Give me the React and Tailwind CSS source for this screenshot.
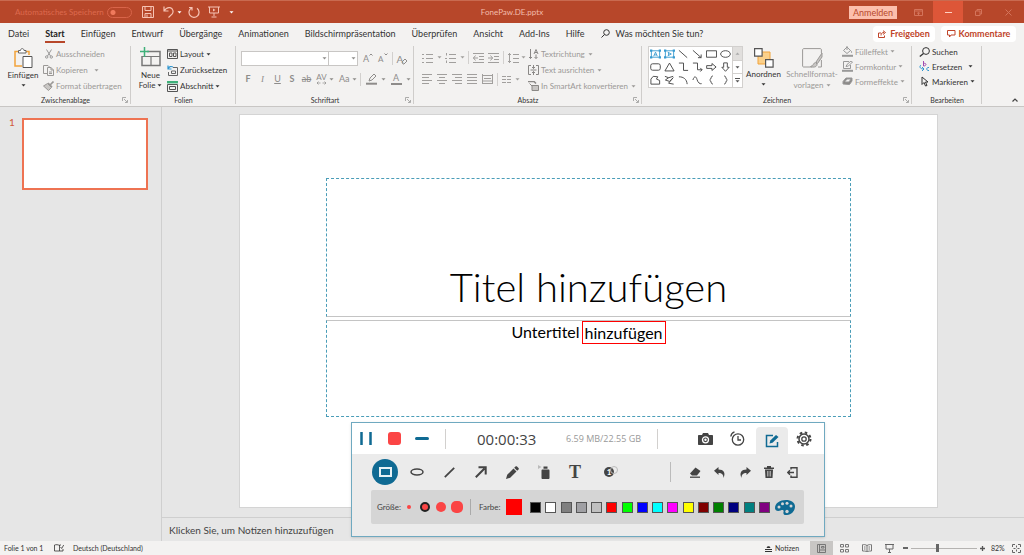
import React from "react";

function Icon({ w = 12, h = 12, box, children, className = "", sw = 1 }) {
  return (
    <svg
      width={w}
      height={h}
      viewBox={box || `0 0 ${w} ${h}`}
      fill="none"
      stroke="currentColor"
      strokeWidth={sw}
      className={`shrink-0 ${className}`}
      aria-hidden="true"
    >
      {children}
    </svg>
  );
}

function Caret({ className = "" }) {
  return (
    <svg width="5" height="3" viewBox="0 0 5 3" className={`shrink-0 ${className}`} aria-hidden="true">
      <path d="M0.5 0.3h4L2.5 2.6z" fill="currentColor" />
    </svg>
  );
}

function Sep({ className = "bg-[#d2d0ce]" }) {
  return <span className={`w-px shrink-0 ${className}`} />;
}

/* ---------- title bar ---------- */

function TitleBar() {
  return (
    <header className="flex h-[23px] shrink-0 items-center border-t border-[#c96a50] bg-[#b7472a] text-[8px] text-[#f0b8a6]">
      <div className="flex flex-1 items-center">
        <label className="flex items-center gap-1 pl-[15px] text-[#dd6a4e]">
          <span className="w-[88px] text-[8px] whitespace-nowrap">Automatisches Speichern</span>
          <input
            type="checkbox"
            role="switch"
            className="h-[11px] w-[25px] appearance-none rounded-full border border-[#d9654a] bg-[radial-gradient(circle_at_5px_50%,#f07a5c_2px,transparent_3px)]"
          />
        </label>
        <div className="flex items-center pl-[10px] text-[#f6c3b4]">
          <button aria-label="Speichern">
            <Icon>
              <path d="M.5.5h11v11H.5zM3 .5v4h6v-4M3 11.500v-4h6v4M5 8.500v3" />
            </Icon>
          </button>
          <button aria-label="Rückgängig" className="ml-[9px] flex items-center gap-[3px]">
            <Icon w={11}>
              <path d="M1 .5v4.500h4.500M1.200 4.800C3 2 5 1.200 7 1.700c3 .8 4 4 2 6.500L5.500 11.500" strokeWidth="1.200" />
            </Icon>
            <Caret className="text-white" />
          </button>
          <button aria-label="Wiederholen" className="ml-[6px]">
            <Icon>
              <path d="M3.500 2A5 5 0 1 0 9 2.300M1 1.500h3v3" strokeWidth="1.200" />
            </Icon>
          </button>
          <button aria-label="Von Anfang an" className="ml-[8px]">
            <Icon>
              <path d="M0 1h12M1.500 1v6h9V1M6 7v3M3.500 11h5" />
              <path d="M5 2.500v3l2.500-1.500z" fill="currentColor" stroke="none" />
            </Icon>
          </button>
          <button aria-label="Symbolleiste anpassen" className="ml-[9px]">
            <Caret className="text-white" />
          </button>
        </div>
      </div>
      <span className="text-[#f3bcab]">FonePaw.DE.pptx</span>
      <div className="flex flex-1 items-center justify-end self-stretch">
        <button className="mr-[6px] h-[13px] w-[48px] bg-[#fcbfad] text-[9px] leading-[13px] text-[#b7472a]">Anmelden</button>
        <button aria-label="Menübandoptionen" className="flex w-[30px] justify-center text-[#d4745b]">
          <Icon w={9} h={7}>
            <path d="M.5.5h8v6h-8zM.5 2h8M4.500 6V3.500M3 4.500l1.500-1 1.500 1" />
          </Icon>
        </button>
        <button aria-label="Minimieren" className="flex w-[30px] items-center justify-center self-stretch bg-[#dd5638] text-[#ffd0c2]">
          <Icon w={7} h={1}>
            <path d="M0 .5h7" />
          </Icon>
        </button>
        <button aria-label="Verkleinern" className="flex w-[30px] justify-center text-[#d4745b]">
          <Icon w={7} h={7}>
            <path d="M.5 2h4.500v4.500H.5zM2 2V.5h4.500V5H5" />
          </Icon>
        </button>
        <button aria-label="Schließen" className="flex w-[31px] justify-center text-[#d4745b]">
          <Icon w={7} h={7}>
            <path d="M.5.5l6 6M6.500.5l-6 6" />
          </Icon>
        </button>
      </div>
    </header>
  );
}

/* ---------- tabs ---------- */

const TABS = [
  "Datei",
  "Start",
  "Einfügen",
  "Entwurf",
  "Übergänge",
  "Animationen",
  "Bildschirmpräsentation",
  "Überprüfen",
  "Ansicht",
  "Add-Ins",
  "Hilfe",
];

function TabBar() {
  return (
    <nav className="flex h-[21px] shrink-0 items-center text-[9px] text-[#333]">
      <div className="flex items-center gap-4 pl-[8px]">
        {TABS.map((t) => (
          <button
            key={t}
            className={
              t === "Start"
                ? "border-b-2 border-[#b7472a] pt-[2px] leading-[15px] font-bold text-[#222]"
                : "border-b-2 border-transparent pt-[2px] leading-[15px]"
            }
          >
            {t}
          </button>
        ))}
      </div>
      <button className="ml-[16px] flex items-center gap-[6px]">
        <Icon w={9} h={9}>
          <circle cx="5.500" cy="3.500" r="2.800" />
          <path d="M3.500 5.500L.5 8.500" />
        </Icon>
        Was möchten Sie tun?
      </button>
      <div className="ml-auto flex gap-[6px] pr-2 font-bold text-[#c0452a]">
        <button className="flex h-4 w-[62px] items-center justify-center gap-[3px] rounded-sm bg-white">
          <Icon w={9} h={8}>
            <path d="M3 3H.5v4.500h6V5.500M3 5.500C3 3.500 4 2.500 6 2.500M5 .7l2.500 1.800L5 4.500" />
          </Icon>
          Freigeben
        </button>
        <button className="flex h-4 w-[75px] items-center justify-center gap-[3px] rounded-sm bg-white">
          <Icon w={9} h={8}>
            <path d="M.5.5h7.500v4.500H4L2.500 7V5h-2z" />
          </Icon>
          Kommentare
        </button>
      </div>
    </nav>
  );
}

/* ---------- ribbon ---------- */

function Launcher() {
  return (
    <button aria-label="Dialogfeld öffnen" className="absolute right-[3px] bottom-[3px] text-[#999]">
      <Icon w={6} h={6} sw={0.8}>
        <path d="M.5 4V.5H4M2 2l3 3M5.500 3v2.500H3" />
      </Icon>
    </button>
  );
}

function Group({ title, className, launcher, children }) {
  return (
    <section className={`relative flex shrink-0 flex-col ${className}`}>
      <div className="flex flex-1 items-start">{children}</div>
      <h2 className="text-center text-[7px] leading-[12px] text-[#333]">{title}</h2>
      {launcher && <Launcher />}
      <span className="absolute top-[2px] right-0 bottom-[2px] w-px bg-[#cfcdcb]" />
    </section>
  );
}

function Row({ icon, text, caret, off, gap = "ml-1" }) {
  return (
    <button
      className={`flex items-center gap-[2px] text-[8px] whitespace-nowrap ${off ? "text-[#9b9997]" : "text-[#333]"}`}
    >
      <span className="flex w-[11px] shrink-0 justify-center">{icon}</span>
      {text}
      {caret && <Caret className={gap} />}
    </button>
  );
}

function Clipboard() {
  return (
    <Group title="Zwischenablage" className="w-[131px]" launcher>
      <button className="flex w-[43px] flex-col items-center pt-[4px] pl-[3px] text-[8px] leading-[12px] text-[#333]">
        <Icon w={19} h={20}>
          <path d="M4 3.500H1v14.500h7M12 3.500h3V7" stroke="#f2a33a" strokeWidth="1.500" />
          <path d="M4.500 5V2.500H6.500C6.500 0 10 0 10 2.500h2V5z" fill="#fff" stroke="#666" />
          <path d="M9 8.500h9v11H9z" fill="#fff" stroke="#555" />
        </Icon>
        <span className="mt-px mb-[3px]">Einfügen</span>
        <Caret />
      </button>
      <div className="flex flex-col pt-[2px] [&>button]:h-[16px]">
        <Row
          off
          text="Ausschneiden"
          icon={
            <Icon w={8} h={10} className="text-[#999]">
              <path d="M1.500.5l4 6.500M6.500.5l-4 6.500" />
              <circle cx="1.700" cy="8" r="1.200" />
              <circle cx="6.300" cy="8" r="1.200" />
            </Icon>
          }
        />
        <Row
          off
          caret
          text="Kopieren"
          icon={
            <Icon w={11} h={11}>
              <path d="M4 8.500H.5v-8H5L6.500 2M4.500 2.500H8l2.500 2.500v5.500h-6zM8 2.500V5h2.500M6 7h3M6 8.500h3" />
            </Icon>
          }
        />
        <Row
          off
          text="Format übertragen"
          icon={
            <Icon w={11} h={10}>
              <path d="M10.500.5L7.500 3.500M5 2l4 4" strokeWidth="1.600" />
              <path d="M4.500 2.500l4 4-3 3L.5 5z" fill="#c8c6c4" />
            </Icon>
          }
        />
      </div>
    </Group>
  );
}

function Slides() {
  return (
    <Group title="Folien" className="w-[105px]">
      <button className="flex w-[36px] flex-col items-center pt-[3px] pl-[3px] text-[8px] leading-[10px] text-[#333]">
        <Icon w={21} h={20}>
          <path d="M7 4.500h13v14H2V9" stroke="#777" strokeWidth="1.500" />
          <path d="M2 9.500h18M11 9.500v9" stroke="#777" strokeWidth="1.200" />
          <path d="M4.500 0v10M0 4.500h9" stroke="#3fb07a" strokeWidth="1.500" />
        </Icon>
        <span className="mt-[3px]">Neue</span>
        <span className="flex items-center gap-[2px]">
          Folie <Caret />
        </span>
      </button>
      <div className="flex flex-col pt-[2px] [&>button]:h-[16px]">
        <Row
          caret
          gap="ml-0"
          text="Layout"
          icon={
            <Icon w={11} h={10}>
              <path d="M.5.5h10v9H.5zM.5 2h10M2.500 4h2.500v3.500H2.500zM6.500 4H9v3.500H6.500z" stroke="#555" />
            </Icon>
          }
        />
        <Row
          text="Zurücksetzen"
          icon={
            <Icon w={11} h={11}>
              <path d="M6 2.500h4.500v8h-9V7M4.500 6h4v2.500h-4z" stroke="#666" />
              <path d="M1 .5v3.500h3.500M1 4C2 1.500 4 1 6 2" stroke="#2f95cf" strokeWidth="1.200" />
            </Icon>
          }
        />
        <Row
          caret
          gap="ml-0"
          text="Abschnitt"
          icon={
            <Icon w={11} h={11}>
              <path d="M0 1.200h11" stroke="#3fb07a" strokeWidth="2.400" />
              <path d="M.5 3.500h10v7H.5zM2.500 5.500h6v3h-6z" stroke="#555" />
            </Icon>
          }
        />
      </div>
    </Group>
  );
}

function FontGroup() {
  const g = "text-[#8e8c8a]";
  return (
    <Group title="Schriftart" className="w-[178px]" launcher>
      <div className="flex flex-1 flex-col pt-[7px] pl-[5px]">
        <div className={`flex h-[15px] items-center ${g}`}>
          <span className="relative flex w-[88px] items-center">
            <select aria-label="Schriftart" className="h-[15px] w-full appearance-none border border-[#c8c6c4] bg-white">
              <option></option>
            </select>
            <Caret className="absolute right-[2px]" />
          </span>
          <span className="relative flex w-[29px] items-center">
            <select aria-label="Schriftgrad" className="h-[15px] w-full appearance-none border border-l-0 border-[#c8c6c4] bg-white">
              <option></option>
            </select>
            <Caret className="absolute right-[2px]" />
          </span>
          <button aria-label="Schriftgrad vergrößern" className="ml-[5px] flex items-start text-[9px] leading-[12px]">
            A
            <Icon w={4} h={3}>
              <path d="M.5 2.500L2 1l1.500 1.500" />
            </Icon>
          </button>
          <button aria-label="Schriftgrad verkleinern" className="ml-[5px] flex items-start text-[8px] leading-[12px]">
            A
            <Icon w={4} h={3}>
              <path d="M.5.5L2 2 3.500.5" />
            </Icon>
          </button>
          <Sep className="ml-[4px] h-[13px] bg-[#d2d0ce]" />
          <button aria-label="Formatierung löschen" className="ml-[4px] flex items-end text-[10px] leading-[12px]">
            A
            <Icon w={6} h={7} className="-ml-[2px]">
              <path d="M1 4l3-3 2 2-3 3H2z" />
            </Icon>
          </button>
        </div>
        <div className={`mt-[5px] flex h-[16px] items-center text-[9px] leading-[14px] ${g}`}>
          <button className="w-[14px] font-bold">F</button>
          <button className="w-[15px] font-['Liberation_Serif',serif] italic">I</button>
          <button className="w-[15px] underline">U</button>
          <button className="w-[14px] font-bold">S</button>
          <button className="w-[15px] line-through">ab</button>
          <button aria-label="Zeichenabstand" className="flex w-[20px] items-center justify-end gap-[2px]">
            <span className="flex flex-col items-center text-[8px] leading-[8px]">
              AV
              <Icon w={11} h={4}>
                <path d="M2.500.5L1 2l1.500 1.500M1 2h3.500M8.500.5L10 2 8.500 3.500M10 2H6.500" strokeWidth=".7" />
              </Icon>
            </span>
            <Caret />
          </button>
          <button className="ml-[5px] flex items-center gap-[2px]">
            Aa <Caret />
          </button>
          <Sep className="ml-[3px] h-[13px] bg-[#d2d0ce]" />
          <button aria-label="Texthervorhebungsfarbe" className="ml-[5px] flex items-center gap-[4px]">
            <Icon w={11} h={12}>
              <path d="M3 8l1-3 4-4 2 2-4 4-3 1z" />
              <path d="M0 10.700h11" strokeWidth="2" />
            </Icon>
            <Caret />
          </button>
          <button aria-label="Schriftfarbe" className="ml-[5px] flex items-center gap-[4px]">
            <span className="flex h-[12px] w-[11px] flex-col items-center border-b-2 border-current leading-[10px]">A</span>
            <Caret />
          </button>
        </div>
      </div>
    </Group>
  );
}

function Lines({ d }) {
  return (
    <Icon w={11} h={10}>
      <path d={d} />
    </Icon>
  );
}

function Paragraph() {
  return (
    <Group title="Absatz" className="w-[228px]" launcher>
      <div className="flex w-[114px] shrink-0 flex-col pt-[6px] pl-[8px] text-[#a19f9d]">
        <div className="flex h-[15px] items-center">
          <button aria-label="Aufzählungszeichen" className="flex items-center gap-[4px]">
            <Lines d="M0 1.500h2M0 5.500h2M0 9.500h2M4 1.500h7M4 5.500h7M4 9.500h7" />
            <Caret />
          </button>
          <button aria-label="Nummerierung" className="ml-[3px] flex items-center gap-[4px]">
            <Lines d="M1.500 0v2.500M0 5.500h2M1.500 7.500V10M4 1.500h7M4 5.500h7M4 9.500h7" />
            <Caret />
          </button>
          <Sep className="ml-[3px] h-[13px] bg-[#d2d0ce]" />
          <button aria-label="Listenebene verringern" className="ml-[4px]">
            <Lines d="M0 .5h11M6 3.500h5M6 6.500h5M0 9.500h11M0 5h5M2.500 2.500L0.500 5l2 2.500" />
          </button>
          <button aria-label="Listenebene erhöhen" className="ml-[4px]">
            <Lines d="M0 .5h11M6 3.500h5M6 6.500h5M0 9.500h11M0 5h5M2.500 2.500L4.500 5l-2 2.500" />
          </button>
          <Sep className="ml-[4px] h-[13px] bg-[#d2d0ce]" />
          <button aria-label="Zeilenabstand" className="ml-[4px] flex items-center gap-[2px]">
            <Lines d="M1.500 0v10M0 2L1.500.5 3 2M0 8l1.500 1.500L3 8M5 1.500h6M5 5.500h6M5 9.500h6" />
            <Caret />
          </button>
        </div>
        <div className="mt-[6px] flex h-[16px] items-center gap-[4px]">
          <button aria-label="Linksbündig">
            <Lines d="M0 .5h10M0 3.500h7M0 6.500h10M0 9.500h7" />
          </button>
          <button aria-label="Zentriert">
            <Lines d="M0 .5h10M2 3.500h6M0 6.500h10M2 9.500h6" />
          </button>
          <button aria-label="Rechtsbündig">
            <Lines d="M0 .5h10M3 3.500h7M0 6.500h10M3 9.500h7" />
          </button>
          <button aria-label="Blocksatz">
            <Lines d="M0 .5h10M0 3.500h10M0 6.500h10M0 9.500h10" />
          </button>
          <button aria-label="Verteilt">
            <Lines d="M.5 0v10M10.500 0v10M0 1.500h11M2 4.500h7M0 7h11M0 9.500h11" />
          </button>
          <Sep className="h-[13px] bg-[#d2d0ce]" />
          <button aria-label="Spalten" className="flex items-center gap-[4px]">
            <Icon w={9} h={7}>
              <path d="M0 .5h4M0 3.500h4M0 6.500h4M5 .5h4M5 3.500h4M5 6.500h4" />
            </Icon>
            <Caret />
          </button>
        </div>
      </div>
      <div className="flex flex-col pt-[2px] [&>button]:h-[16px]">
        <Row
          off
          caret
          gap="ml-[1px]"
          text="Textrichtung"
          icon={
            <Icon w={10} h={11} className="text-[#8a8886]">
              <path d="M1.500 0v9.500M0 8l1.500 1.500L3 8M7 5.500v4M5.500 8L7 9.500 8.500 8M5 5l2-4.500L9 5M5.800 3.500h2.400" />
            </Icon>
          }
        />
        <Row
          off
          caret
          gap="ml-[1px]"
          text="Text ausrichten"
          icon={
            <Icon w={11} h={10} className="text-[#8a8886]">
              <path d="M3 .5H.5v9H3M8 .5h2.500v9H8M5.500 0v3.500M5.500 10V6.500M2.500 5h6M4 2l1.500 1.500L7 2M4 8l1.500-1.500L7 8" />
            </Icon>
          }
        />
        <Row
          off
          caret
          gap="ml-[1px]"
          text="In SmartArt konvertieren"
          icon={
            <Icon w={11} h={10} className="text-[#8a8886]">
              <path d="M0 .5h6l2 2" strokeWidth="1.500" />
              <path d="M1.500 2.500L4 5M4 4.500h6.500v5H4z" fill="#c8c6c4" />
            </Icon>
          }
        />
      </div>
    </Group>
  );
}

const TextBoxShape = ({ down }) => (
  <>
    <path d="M1.500 1.500h9v7h-9z" stroke="#3a9bd0" />
    <path d="M0 0h2.500v2.500H0zM9.500 0H12v2.500H9.500zM0 7.500h2.500V10H0zM9.500 7.500H12V10H9.500z" fill="#3a9bd0" stroke="none" />
    <path d={down ? "M4 3l4 2-4 2M5 3.500v3" : "M4 7.500L6 3l2 4.500M4.800 6h2.400"} stroke="#3a9bd0" />
  </>
);

const SHAPES = [
  <TextBoxShape />,
  <TextBoxShape down />,
  <path d="M1 1l9 8" />,
  <path d="M1 1l9 8M10 5.500V9H6.500" />,
  <path d="M.5 1.500h11v7H.5z" />,
  <ellipse cx="6" cy="5" rx="5.300" ry="3.600" />,
  <rect x=".8" y="1.500" width="10.400" height="7" rx="2" />,
  <path d="M6 .7L11 9.300H1z" />,
  <path d="M1 .7h5v8h5" />,
  <path d="M1 .7h5v7.300h5M9 6l2 2-2 2" />,
  <path d="M.7 3.500h5.800V1.200L11 5 6.500 8.800V6.500H.7z" />,
  <path d="M4 .5h4v4.800h2L6 9.700 2 5.300h2z" />,
  <path d="M1 9.500V4L3.500 1l5 .5L7 4l3.500 1.500v4z" />,
  <path d="M1 1l4 1.500L1.500 5 6 6.500l4-4-5 6 5.500 1M5 2.500L10 1" />,
  <path d="M1 1.500c5 0 8.500 2.500 9 8" />,
  <path d="M1 5C2.500 0 4.500 1 5.500 4.500S8.500 9.500 10.500 9" />,
  <path d="M7.500.5C5 .5 6 4.500 4 5c2 .5 1 4.500 3.500 4.500" />,
  <path d="M4.500.5C7 .5 6 4.500 8 5 6 5.500 7 9.500 4.500 9.500" />,
];

const SHAPE_NAMES = [
  "Textfeld", "Vertikales Textfeld", "Linie", "Pfeil", "Rechteck", "Ellipse",
  "Abgerundetes Rechteck", "Dreieck", "Gewinkelt", "Gewinkelter Pfeil", "Pfeil rechts", "Pfeil unten",
  "Freihandform", "Freihand", "Bogen", "Kurve", "Linke Klammer", "Rechte Klammer",
];

function Drawing() {
  return (
    <Group title="Zeichnen" className="w-[270px]" launcher>
      <div className="mt-[2px] ml-[6px] flex h-[42px] w-[95px] shrink-0 border border-[#d2d0ce] bg-white">
        <div className="grid flex-1 grid-cols-6 content-around justify-items-center text-[#444]">
          {SHAPES.map((s, i) => (
            <button key={SHAPE_NAMES[i]} aria-label={SHAPE_NAMES[i]}>
              <Icon w={11} h={10} box="0 0 12 10">
                {s}
              </Icon>
            </button>
          ))}
        </div>
        <div className="flex w-[10px] flex-col border-l border-[#d2d0ce] text-[#555] [&>button]:flex [&>button]:flex-1 [&>button]:items-center [&>button]:justify-center">
          <button aria-label="Nach oben" className="bg-[#e1dfdd] text-[#aaa]">
            <Caret className="rotate-180" />
          </button>
          <button aria-label="Nach unten" className="border-y border-[#d2d0ce]">
            <Caret />
          </button>
          <button aria-label="Mehr" className="flex-col gap-px">
            <span className="h-px w-[5px] bg-current" />
            <Caret />
          </button>
        </div>
      </div>
      <button className="flex w-[41px] shrink-0 flex-col items-center pt-[4px] text-[8px] leading-[11px] text-[#333]">
        <Icon w={20} h={20}>
          <path d="M4 4h12v12H4z" fill="#fbd08a" stroke="#f2a33a" />
          <path d="M.6.6h7.500v7.500H.6zM11.600 11.600h7.500v7.500h-7.500z" fill="#fff" stroke="#555" strokeWidth="1.200" />
        </Icon>
        <span className="mt-px">Anordnen</span>
        <Caret className="mt-[3px]" />
      </button>
      <button className="flex w-[56px] shrink-0 flex-col items-center pt-[4px] text-[8px] leading-[11px] whitespace-nowrap text-[#9b9997]">
        <Icon w={21} h={20}>
          <path d="M10 19H1.500C1 19 .6 18.500.6 18V2C.6 1 1 .6 2 .6h16c1 0 1.400.4 1.400 1.400v3M19.400 12v7H16" />
          <path d="M20 5l-6 9 1.500 1.500L20 9zM13.500 14.500c-2 0-2 3.500-5 4 3.500 1.500 7 0 6.500-2.500z" fill="#c8c6c4" />
        </Icon>
        <span className="mt-px">Schnellformat-</span>
        <span className="flex items-center gap-[2px]">
          vorlagen <Caret />
        </span>
      </button>
      <div className="flex flex-col pl-[2px] [&>button]:h-[15px]">
        <Row
          off
          caret
          gap="ml-0"
          text="Fülleffekt"
          icon={
            <Icon w={11} h={11} className="text-[#999]">
              <path d="M5 1L1.500 4.500 5 7.500l3.500-3zM5 0v4M8.500 4.500c1.500 1 1 2 1 2.500" />
              <path d="M0 9.800h11" strokeWidth="2" />
            </Icon>
          }
        />
        <Row
          off
          caret
          gap="ml-0"
          text="Formkontur"
          icon={
            <Icon w={11} h={11} className="text-[#999]">
              <path d="M7 .5H1.500v7h7V4M4 5.500l1-2L9 0l1.500 1-4 4z" />
              <path d="M0 9.800h11" strokeWidth="2" />
            </Icon>
          }
        />
        <Row
          off
          caret
          gap="ml-0"
          text="Formeffekte"
          icon={
            <Icon w={11} h={9} className="text-[#999]">
              <path d="M1 7V4.500L4 1h6v3L7.500 7.500z" fill="#8a8886" />
              <path d="M3 4.500L5 2h4L7 5H3z" fill="#f3f2f1" />
            </Icon>
          }
        />
      </div>
    </Group>
  );
}

function Editing() {
  return (
    <Group title="Bearbeiten" className="w-[70px]">
      <div className="flex flex-col pl-[7px] [&>button]:h-[15px]">
        <Row
          text="Suchen"
          icon={
            <Icon w={11} h={10}>
              <circle cx="7" cy="4" r="3.400" />
              <path d="M4.500 6.500L.8 9.500" strokeWidth="1.300" />
            </Icon>
          }
        />
        <Row
          caret
          text="Ersetzen"
          icon={
            <Icon w={11} h={11}>
              <path d="M4.500 0v5M4.500 2.500c3-1 3.500 2.500 0 2.500" stroke="#a04bb0" />
              <path d="M10 6.500c-3-.5-3 3.500 0 3M2 4C0 5.500 1 8 4.500 8M3 6l2 2-2 2" stroke="#2f95cf" />
            </Icon>
          }
        />
        <Row
          caret
          gap="ml-0"
          text="Markieren"
          icon={
            <Icon w={8} h={11}>
              <path d="M1 1v7.500l2-2 1.500 3.500L6 9.500 4.500 6H7z" />
            </Icon>
          }
        />
      </div>
    </Group>
  );
}

/* ---------- workspace ---------- */

function Slide() {
  return (
    <div className="mt-[7px] mr-[86px] mb-[9px] ml-[77px] flex flex-1 flex-col border border-[#d4d4d4] bg-white px-[86px] pt-[63px]">
      <div className="flex h-[139px] items-end justify-center border border-dashed border-[#4a9db8] border-b-[#c4c4c4] [border-bottom-style:solid] text-[40px] leading-[58px] font-light text-black">
        <h1>Titel hinzufügen</h1>
      </div>
      <div className="mt-[3px] flex h-[97px] items-start justify-center border border-dashed border-[#4a9db8] border-t-[#c4c4c4] [border-top-style:solid] text-[16px] leading-[21px] text-black">
        <p className="flex">
          Untertitel
          <span className="ml-[2px] border border-[#ff0000] px-[2px]">hinzufügen</span>
        </p>
      </div>
    </div>
  );
}

/* ---------- recorder ---------- */

const SWATCHES = [
  ["Schwarz", "bg-black"],
  ["Weiß", "bg-white"],
  ["Grau", "bg-[#808080]"],
  ["Mittelgrau", "bg-[#a0a0a4]"],
  ["Silber", "bg-[#c0c0c0]"],
  ["Rot", "bg-[#ff0000]"],
  ["Grün", "bg-[#00ff00]"],
  ["Blau", "bg-[#0000ff]"],
  ["Cyan", "bg-[#00ffff]"],
  ["Magenta", "bg-[#ff00ff]"],
  ["Gelb", "bg-[#ffff00]"],
  ["Dunkelrot", "bg-[#800000]"],
  ["Dunkelgrün", "bg-[#008000]"],
  ["Dunkelblau", "bg-[#000080]"],
  ["Petrol", "bg-[#008080]"],
  ["Violett", "bg-[#800080]"],
];

function Tool({ name, w = "w-[32px]", className = "", children }) {
  return (
    <button aria-label={name} className={`flex items-center justify-center ${w} ${className}`}>
      {children}
    </button>
  );
}

function Recorder() {
  return (
    <div className="absolute top-[422px] left-[351px] flex w-[474px] flex-col border border-[#6fa9c0] bg-[#ebebeb] pb-[12px] text-[#444] shadow-sm">
      <div className="flex h-[31px] items-center bg-white">
        <Tool name="Pause" w="w-[28px]">
          <Icon w={12} h={13}>
            <path d="M1.500 0v13M10.500 0v13" stroke="#0f6a93" strokeWidth="2.500" />
          </Icon>
        </Tool>
        <Tool name="Stopp" w="w-[28px]">
          <span className="size-[13px] rounded-[3px] bg-[#fb4545]" />
        </Tool>
        <Tool name="Minimieren" w="w-[28px]">
          <span className="h-[3px] w-[14px] rounded-full bg-[#0f6a93]" />
        </Tool>
        <Sep className="ml-[9px] h-[20px] bg-[#d2d0ce]" />
        <span className="ml-[31px] w-[60px] font-['Open_Sans',sans-serif] text-[15px] leading-[20px] whitespace-nowrap">00:00:33</span>
        <span className="ml-[29px] w-[73px] font-['Open_Sans',sans-serif] text-[9px] whitespace-nowrap text-[#999]">6.59 MB/22.55 GB</span>
        <Sep className="ml-[18px] h-[20px] bg-[#d2d0ce]" />
        <Tool name="Bildschirmfoto" className="ml-auto">
          <Icon w={15} h={12}>
            <path d="M0 3c0-.6.400-1 1-1h3l1-2h5l1 2h3c.6 0 1 .4 1 1v8c0 .6-.4 1-1 1H1c-.6 0-1-.4-1-1z" fill="#444" stroke="none" />
            <circle cx="7.500" cy="6.800" r="3" fill="#444" stroke="#fff" strokeWidth="1.300" />
            <circle cx="7.500" cy="6.800" r="1.200" fill="#fff" stroke="none" />
          </Icon>
        </Tool>
        <Tool name="Zeitplan" className="mr-[3px]">
          <Icon w={15} h={15} sw={1.3}>
            <circle cx="8" cy="8.500" r="5.700" />
            <path d="M8 5v4h3M.8 5.500C1 3.500 2.500 1.500 4.500.8" />
          </Icon>
        </Tool>
        <Tool name="Zeichnen" className="h-[27px] self-end rounded-t bg-[#ebebeb] text-[#0f6a93]">
          <Icon w={15} h={14} sw={1.5}>
            <path d="M8 1.500H1.500v11h11V8" />
            <path d="M4.500 9.500l.8-3L11 1l2.500 2-6 5.700z" fill="currentColor" stroke="none" />
          </Icon>
        </Tool>
        <Tool name="Einstellungen" className="mr-[4px]">
          <Icon w={16} h={16}>
            <circle cx="8" cy="8" r="5" strokeWidth="1.500" />
            <circle cx="8" cy="8" r="2.200" strokeWidth="1.300" />
            <circle cx="8" cy="8" r="6.500" strokeWidth="2" strokeDasharray="2.550 2.550" />
          </Icon>
        </Tool>
      </div>
      <div className="flex h-[36px] items-center pr-[20px] pl-[17px]">
        <Tool name="Rechteck">
          <span className="flex size-[26px] items-center justify-center rounded-full bg-[#0f6a93]">
            <span className="h-[10px] w-[13px] border-2 border-[#e8f2f6]" />
          </span>
        </Tool>
        <Tool name="Ellipse">
          <Icon w={14} h={8}>
            <ellipse cx="7" cy="4" rx="6" ry="3" strokeWidth="1.500" />
          </Icon>
        </Tool>
        <Tool name="Linie">
          <Icon w={11} h={11}>
            <path d="M.8 10.200l9.400-9.400" strokeWidth="1.800" />
          </Icon>
        </Tool>
        <Tool name="Pfeil" w="w-[31px]">
          <Icon w={12} h={12}>
            <path d="M.8 11.200L9.500 2.500M3.500 1.300h7.200v7.200" strokeWidth="2" />
          </Icon>
        </Tool>
        <Tool name="Stift">
          <Icon w={13} h={13}>
            <path d="M0 13l1.200-4.200L7.500 2.500l3 3L4.200 11.800zM8.200 1.800L9.500.5c.5-.5 1-.5 1.500 0l1.500 1.500c.5.5.5 1 0 1.500L11.200 4.800z" fill="#444" stroke="none" />
          </Icon>
        </Tool>
        <Tool name="Sprühdose">
          <Icon w={12} h={14}>
            <path d="M4.500 4.500h6c.6 0 1 .5 1 1V13c0 .5-.4 1-1 1h-6c-.6 0-1-.5-1-1V5.500c0-.5.400-1 1-1zM5.500 1.500h4v2.200h-4z" fill="#444" stroke="none" />
            <path d="M0 0l3.500 2L0 4z" fill="#bbb" stroke="none" />
          </Icon>
        </Tool>
        <button className="w-[30px] text-center font-['Liberation_Serif',serif] text-[18px] leading-[20px] font-bold" aria-label="Text">T</button>
        <Tool name="Nummerierung" w="w-[38px]">
          <span className="relative flex size-[10px] items-center justify-center rounded-full bg-[#444] text-[8px] leading-none font-bold text-white">
            1
            <span className="absolute -top-[1px] -right-[4px] size-[8px] rounded-full border border-[#bbb]" />
          </span>
        </Tool>
        <Sep className="ml-auto h-[20px] bg-[#bbb]" />
        <Tool name="Radierer" w="w-[25px]" className="ml-[11px]">
          <Icon w={12} h={11}>
            <path d="M1 6.500L6.500.5l5 3.500L8 8.500H3z" fill="#444" stroke="none" />
            <path d="M1 10.200h10" strokeWidth="1.300" />
          </Icon>
        </Tool>
        <Tool name="Rückgängig" w="w-[25px]">
          <Icon w={12} h={11}>
            <path d="M0 3.800L4.500 0v2.500c5 0 7.500 3 5 8.500 0-3.500-1.500-5-5-5v2z" fill="#444" stroke="none" />
          </Icon>
        </Tool>
        <Tool name="Wiederholen" w="w-[25px]">
          <Icon w={12} h={11}>
            <path d="M12 3.800L7.500 0v2.500c-5 0-7.500 3-5 8.500 0-3.500 1.500-5 5-5v2z" fill="#444" stroke="none" />
          </Icon>
        </Tool>
        <Tool name="Löschen" w="w-[24px]">
          <Icon w={10} h={12}>
            <path d="M0 2.200h10M3 .7h4" strokeWidth="1.400" />
            <path d="M1 3.500h8l-.5 8.500h-7z" fill="#444" stroke="none" />
            <path d="M3.500 5v5.500M5 5v5.500M6.500 5v5.500" stroke="#ccc" strokeWidth=".7" />
          </Icon>
        </Tool>
        <Tool name="Beenden" w="w-[23px]">
          <Icon w={11} h={11} sw={1.4}>
            <path d="M4 2.500V.8h6v9.400H4V8.500M.8 5.500H7M3 3.300L.8 5.500 3 7.700" />
          </Icon>
        </Tool>
      </div>
      <div className="mr-[20px] ml-[19px] flex h-[34px] items-center rounded-[2px] bg-[#d5d5d5] pl-[6px] text-[8px]">
        <span className="w-[30px]">Größe:</span>
        <button aria-label="Größe 1" className="size-[4px] rounded-full bg-[#fb4545]" />
        <button aria-label="Größe 2" className="ml-[9px] size-[10px] rounded-full border-2 border-[#222] bg-[#fb4545]" />
        <button aria-label="Größe 3" className="ml-[6px] size-[10px] rounded-full bg-[#fb4545]" />
        <button aria-label="Größe 4" className="ml-[5px] size-[12px] rounded-[5px] bg-[#fb4545]" />
        <Sep className="ml-[7px] h-[16px] bg-[#aaa]" />
        <span className="ml-[8px] w-[27px]">Farbe:</span>
        <span className="size-[16px] bg-[#ff0000]" />
        <div className="ml-[8px] flex w-[240px] justify-between">
          {SWATCHES.map(([n, c]) => (
            <button key={n} aria-label={n} className={`size-[11px] border border-[#555] ${c}`} />
          ))}
        </div>
        <button aria-label="Palette" className="ml-[5px]">
          <Icon w={20} h={15}>
            <path d="M11 0c5 0 9 2.500 9 6.500S17 14.500 12 15c-3 .2-4-1-3.500-3 .5-1.800-.5-2.500-3-1.500C3 11.500 0 11 0 8c0-5 5-8 11-8z" fill="#0f6a93" stroke="none" />
            <g fill="#d5d5d5" stroke="none">
              <circle cx="4" cy="7" r="1.500" />
              <circle cx="7.500" cy="3.800" r="1.500" />
              <circle cx="12" cy="3.300" r="1.500" />
              <circle cx="16" cy="6" r="1.500" />
              <circle cx="12" cy="11.500" r="1.700" />
            </g>
          </Icon>
        </button>
      </div>
    </div>
  );
}

/* ---------- status bar ---------- */

function StatusBar() {
  return (
    <footer className="flex h-[14px] shrink-0 items-center bg-[#f3f2f1] pr-[3px] pl-[4px] text-[7px] text-[#333]">
      <span className="w-[50px] whitespace-nowrap">Folie 1 von 1</span>
      <button aria-label="Rechtschreibprüfung">
        <Icon w={10} h={8} sw={0.8}>
          <path d="M7 1H5.500v6H9V5M5.500 1.500C4 .5 2 .5.500 1v6h5M6.500 3l1.200 1.500L9.700 1" />
        </Icon>
      </button>
      <button className="ml-[9px] whitespace-nowrap">Deutsch (Deutschland)</button>
      <div className="ml-auto flex items-center self-stretch">
        <button className="mr-[10px] flex w-[35px] items-center gap-[3px]">
          <Icon w={7} h={7}>
            <path d="M0 4.500h7M0 6.500h7M2 2.500h3L3.500 1z" />
          </Icon>
          Notizen
        </button>
        <button aria-label="Normalansicht" className="flex w-[23px] items-center justify-center self-stretch bg-[#c8c6c4]">
          <Icon w={9} h={9}>
            <path d="M.5.5h8v8h-8zM2.500.5v8M2.500 6h6M4.500 2.500h2.500v1.500H4.500z" stroke="#777" />
          </Icon>
        </button>
        <button aria-label="Foliensortierung" className="flex w-[22px] justify-center">
          <Icon w={9} h={9}>
            <path d="M.5.5h3v2.500h-3zM5.500.5h3v2.500h-3zM.5 5.500h3V8h-3zM5.500 5.500h3V8h-3z" stroke="#777" />
          </Icon>
        </button>
        <button aria-label="Leseansicht" className="flex w-[23px] justify-center">
          <Icon w={10} h={8}>
            <path d="M5 1.500C3.500.5 2 .5.5.7V7c1.500 0 3 0 4.500.5C6.500 7 8 7 9.500 7V.7C8 .5 6.500.5 5 1.500zM5 1v6M2 3h1.500M6.500 3H8M2 5h1.500M6.500 5H8" stroke="#777" />
          </Icon>
        </button>
        <button aria-label="Bildschirmpräsentation" className="flex w-[22px] justify-center">
          <Icon w={9} h={9}>
            <path d="M0 .5h9M1 .5v4.500h7V.5M4.500 5v3M3 8.500h3" stroke="#666" />
          </Icon>
        </button>
        <button aria-label="Verkleinern" className="ml-[3px] h-[2px] w-[5px] bg-[#666]" />
        <input
          type="range"
          aria-label="Zoom"
          min="10"
          max="400"
          defaultValue="165"
          className="mx-[3px] h-[9px] w-[66px] appearance-none bg-[linear-gradient(#b5b3b1,#b5b3b1)] bg-[length:100%_1px] bg-center bg-no-repeat [&::-webkit-slider-thumb]:h-[8px] [&::-webkit-slider-thumb]:w-[3px] [&::-webkit-slider-thumb]:appearance-none [&::-webkit-slider-thumb]:bg-[#666]"
        />
        <button aria-label="Vergrößern">
          <Icon w={5} h={5}>
            <path d="M2.500 0v5M0 2.500h5" stroke="#555" strokeWidth="1.300" />
          </Icon>
        </button>
        <span className="ml-[6px] w-[21px]">82%</span>
        <button aria-label="Folie an Fenster anpassen">
          <Icon w={9} h={9}>
            <path d="M.5 3V.5H3M6 .5h2.500V3M8.500 6v2.500H6M3 8.500H.5V6M4.500 1.500v2M4.500 7.500v-2M1.500 4.500h2M7.500 4.500h-2" stroke="#666" />
          </Icon>
        </button>
      </div>
    </footer>
  );
}

export default function App() {
  return (
    <div className="relative flex min-h-screen flex-col overflow-hidden bg-[#e6e6e6] font-['Lato',sans-serif]">
      <TitleBar />
      <div className="flex shrink-0 flex-col border-b border-[#c8c6c4] bg-[#f3f2f1]">
        <TabBar />
        <div className="flex h-[62px]">
          <Clipboard />
          <Slides />
          <FontGroup />
          <Paragraph />
          <Drawing />
          <Editing />
          <button aria-label="Menüband reduzieren" className="mr-[6px] mb-[4px] ml-auto self-end text-[#444]">
            <Icon w={6} h={4}>
              <path d="M.5 3.500L3 1l2.500 2.500" strokeWidth="1.200" />
            </Icon>
          </button>
        </div>
      </div>
      <main className="flex flex-1">
        <aside className="flex w-[162px] shrink-0 items-start border-r border-[#cfcfcf] pt-[11px] pl-[9px]">
          <span className="w-[13px] text-[10px] leading-[9px] text-[#d0583a]">1</span>
          <button aria-label="Folie 1" className="h-[72px] w-[126px] border-2 border-[#ee7352] bg-white" />
        </aside>
        <div className="flex flex-1 flex-col">
          <Slide />
          <div className="flex h-[24px] items-center border-t border-[#cfcfcf] pl-[7px] text-[10px] leading-[20px] text-[#444]">
            Klicken Sie, um Notizen hinzuzufügen
          </div>
        </div>
      </main>
      <StatusBar />
      <Recorder />
    </div>
  );
}
